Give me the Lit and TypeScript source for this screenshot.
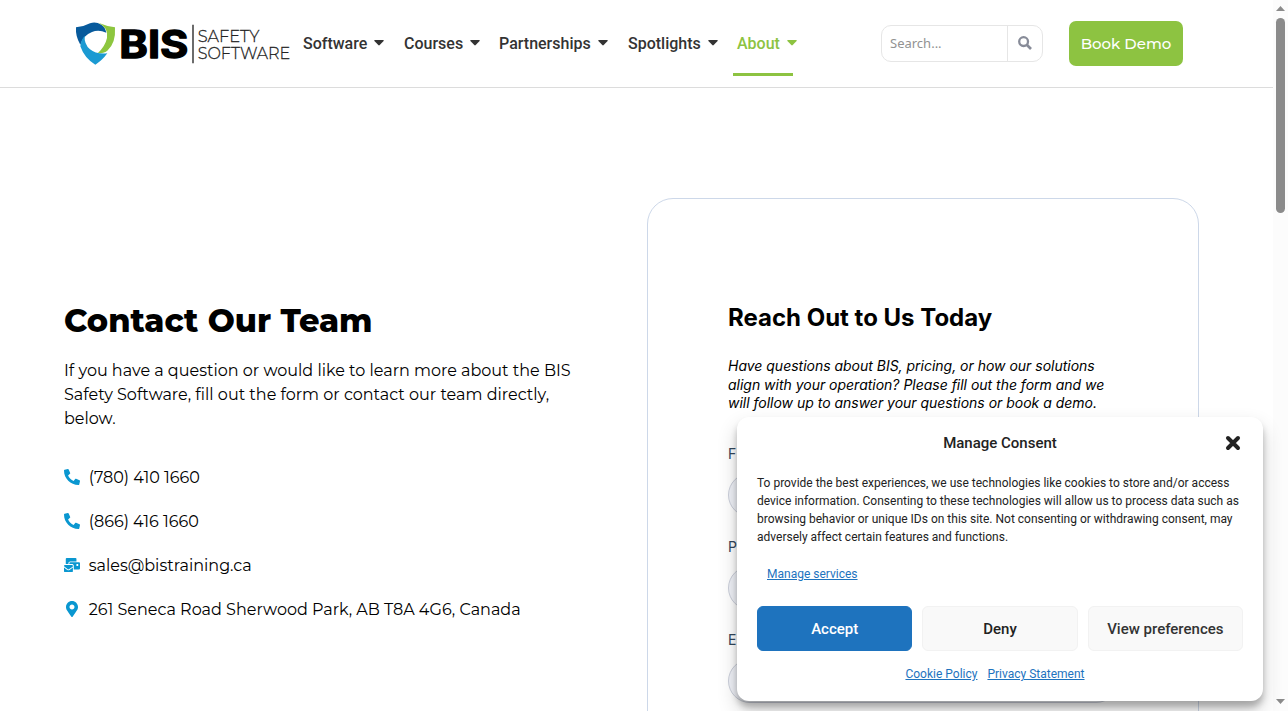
import { LitElement, html, css } from "lit";
import { customElement } from "lit/decorators.js";

const caret = html`<svg class="caret" width="10" height="6" viewBox="0 0 10 6"><path fill="currentColor" d="M.8 0h8.4q.9.2.4 1L5.7 5.1q-.7.6-1.4 0L.4 1Q0 .2.8 0z"/></svg>`;
const phone = html`<svg width="16" height="16" viewBox="0 0 512 512"><path fill="currentColor" d="M493.4 24.6l-104-24c-11.300-2.600-22.900 3.300-27.500 13.900l-48 112c-4.200 9.800-1.400 21.300 6.900 28l60.600 49.600c-36 76.700-98.900 140.500-177.200 177.200l-49.600-60.600c-6.800-8.300-18.200-11.100-28-6.900l-112 48C3.900 366.500-2 378.100.6 389.400l24 104C27.100 504.200 36.700 512 48 512c256.100 0 464-207.500 464-464 0-11.200-7.700-20.900-18.600-23.400z" transform="translate(512) scale(-1 1)"/></svg>`;
const mail = html`<svg width="16" height="16" viewBox="0 0 576 512"><path fill="currentColor" d="M160 448c-25.600 0-51.200-22.400-64-32-64-44.800-83.200-60.800-96-70.400V480c0 17.670 14.330 32 32 32h256c17.670 0 32-14.330 32-32V345.600c-12.800 9.600-32 25.600-96 70.400-12.800 9.600-38.400 32-64 32zm128-192H32c-17.670 0-32 14.330-32 32v16c25.600 19.200 22.400 19.200 115.200 86.400 9.600 6.400 28.800 25.600 44.800 25.600s35.200-19.200 44.800-22.400c92.800-67.200 89.600-67.200 115.200-86.400V288c0-17.670-14.330-32-32-32zm256-96H224c-17.670 0-32 14.330-32 32v32h96c33.210 0 60.590 25.420 63.710 57.820l.29-.22V416h192c17.670 0 32-14.330 32-32V192c0-17.670-14.330-32-32-32zm-32 128h-64v-64h64v64zm-352-96c0-35.290 28.710-64 64-64h224V32c0-17.670-14.330-32-32-32H96C78.330 0 64 14.330 64 32v192h96v-32z"/></svg>`;
const pin = html`<svg width="16" height="16" viewBox="0 0 384 512"><path fill="currentColor" d="M172.268 501.670C26.970 291.031 0 269.413 0 192 0 85.961 85.961 0 192 0s192 85.961 192 192c0 77.413-26.970 99.031-172.268 309.670-9.535 13.774-29.930 13.773-39.464 0zM192 272c44.183 0 80-35.817 80-80s-35.817-80-80-80-80 35.817-80 80 35.817 80 80 80z"/></svg>`;

@customElement("app-root")
export class AppRoot extends LitElement {
  static styles = css`
    :host { display: block; height: 711px; overflow: hidden; position: relative; background: #fff; color: #000; font-family: Inter, sans-serif; }
    * { box-sizing: border-box; }
    svg { display: block; flex: none; }
    .mont { font-family: Montserrat, Inter, sans-serif; }
    .page { width: 1273px; height: 711px; overflow: hidden; }
    header { height: 88px; border-bottom: 1px solid #dcdcdc; display: flex; padding-left: 75px; }
    .logo { margin-top: 21px; }
    nav { display: flex; margin-left: 9px; width: 578px; height: 87px; align-items: center; font: 500 16px Roboto, sans-serif; color: #333; }
    .item { display: flex; align-items: center; height: 22px; flex: none; }
    .caret { margin-left: 7px; margin-top: -2px; }
    .n1 { width: 101px; } .n2 { width: 95px; } .n3 { width: 129px; } .n4 { width: 105px; }
    .n5 { height: 64px; padding: 0 0 0 4px; border-bottom: 3px solid #8dc341; border-top: 3px solid transparent; width: 60px; color: #8dc341; }
    .search { margin-top: 25px; width: 162px; height: 37px; border: 1px solid #e6e6e6; border-radius: 10px; display: flex; align-items: center; font: 13px "Noto Sans", sans-serif; color: #929292; }
    .query { width: 126px; padding-left: 8px; line-height: 35px; border-right: 1px solid #e6e6e6; height: 35px; }
    .glass { margin-left: 10px; color: #878b98; margin-top: -1px; }
    .demo { margin: 21px 0 0 26px; width: 114px; height: 45px; border-radius: 7px; background: #8dc341; color: #fff; display: flex; align-items: center; justify-content: center; font-size: 15px; font-weight: 500; white-space: nowrap; }
    main { display: flex; padding-left: 64px; }
    .contact { width: 583px; padding-top: 212px; white-space: nowrap; }
    h1 { margin: 0; font-size: 32px; font-weight: 800; line-height: 42px; }
    .intro { margin: 17px 0 0; font-size: 16px; line-height: 24px; }
    .intro span { display: block; }
    ul { list-style: none; margin: 35px 0 0; padding: 0; font-size: 16px; }
    li { height: 44px; display: flex; align-items: flex-start; line-height: 24px; }
    li svg { color: #0a97d0; margin: 3px 8.7px 0 0; }
    .card { margin-top: 110px; width: 552px; height: 700px; border: 1px solid #cdd8e9; border-radius: 26px; padding: 103px 80px 0; }
    h2 { font-size: 24px; font-weight: 700; line-height: 32px; margin: 0; }
    .lead { font-size: 14px; font-style: italic; line-height: 18.6px; letter-spacing: -.015px; margin: 23px 0 31px; white-space: nowrap; }
    .field { height: 93px; color: #33475b; font-size: 14px; }
    .field div { line-height: 20px; margin-bottom: 9px; }
    .field p { margin: 0; height: 44px; border: 1px solid #cbcfda; border-radius: 22px; background: #f0f2f8; }
    .bar { position: absolute; right: 0; top: 0; width: 15px; height: 711px; background: #fcfcfc; display: flex; flex-direction: column; align-items: center; }
    .thumb { width: 9px; height: 195px; border-radius: 5px; background: #8b8b8b; margin: 7px 0 486px; }
    .consent { position: absolute; left: 737px; top: 417px; width: 526px; height: 284px; border-radius: 12px; background: #fff; box-shadow: rgba(0,0,0,.19) 0 10px 20px, rgba(0,0,0,.23) 0 6px 6px; padding: 16px 20px; color: #222; font: 12px/18px Roboto, sans-serif; }
    .head { display: grid; grid-template-columns: 20px 1fr 20px; height: 20px; align-items: center; text-align: center; font-size: 15px; font-weight: 500; }
    .head svg { justify-self: end; margin-right: 2px; }
    .copy { margin: 21px 0 19px; white-space: nowrap; }
    a { color: #1e73be; text-decoration: underline; }
    .svc { padding-left: 10px; }
    .buttons { display: grid; grid-template-columns: repeat(3, 1fr); gap: 10px; margin-top: 23px; }
    .btn { height: 45px; border: 1px solid #f2f2f2; border-radius: 6px; background: #f9f9f9; display: flex; align-items: center; justify-content: center; font-size: 15px; font-weight: 500; }
    .pref { color: #333; }
    .accept { background: #1e73be; border-color: #1e73be; color: #fff; }
    .links { display: flex; justify-content: center; gap: 10px; margin-top: 14px; padding-right: 10px; }
  `;

  render() {
    return html`<div class="page">
      <header>
        <svg class="logo" width="219" height="45" viewBox="33 33 657 135">
          <path fill="#075a9c" d="M36 52Q60 50 78 40Q95 34 112 44Q124 52 127 68Q104 58 84 66Q58 76 49 104Q34 80 36 52Z"/>
          <path fill="#8dc63f" d="M103 38Q126 48 153 52Q156 100 130 122Q120 130 101 130Q124 108 129 84Q134 52 103 38Z"/>
          <path fill="#1b9ad2" d="M49 109Q51 90 62 77Q60 102 78 118Q95 133 130 130Q114 152 94 164Q62 146 49 109Z"/>
          <text x="166" y="143" font-family="Inter" font-weight="700" font-size="113" textLength="207" lengthAdjust="spacingAndGlyphs" stroke="#000" stroke-width="4" stroke-linejoin="round">BIS</text>
          <path fill="#222" d="M385 44h4v116h-4z"/>
          <text x="401" y="95" font-family="Montserrat, Inter" font-weight="300" fill="#222" stroke="#222" stroke-width=".8" font-size="50" textLength="185" lengthAdjust="spacingAndGlyphs">SAFETY</text>
          <text x="401" y="146" font-family="Montserrat, Inter" font-weight="300" fill="#222" stroke="#222" stroke-width=".8" font-size="50" textLength="278" lengthAdjust="spacingAndGlyphs">SOFTWARE</text>
        </svg>
        <nav>
          <div class="item n1">Software${caret}</div><div class="item n2">Courses${caret}</div><div class="item n3">Partnerships${caret}</div><div class="item n4">Spotlights${caret}</div><div class="item n5">About${caret}</div>
        </nav>
        <div class="search"><div class="query">Search...</div><svg class="glass" width="14" height="14" viewBox="0 0 14 14"><circle cx="5.600" cy="5.600" r="4.400" fill="none" stroke="currentColor" stroke-width="2.300"/><path d="M9 9l4 4" stroke="currentColor" stroke-width="2.600"/></svg></div>
        <div class="demo mont">Book Demo</div>
      </header>
      <main>
        <section class="contact mont">
          <h1>Contact Our Team</h1>
          <p class="intro"><span>If you have a question or would like to learn more about the BIS</span><span>Safety Software, fill out the form or contact our team directly,</span><span>below.</span></p>
          <ul>
            <li>${phone}<span>(780) 410 1660</span></li>
            <li>${phone}<span>(866) 416 1660</span></li>
            <li>${mail}<span>sales@bistraining.ca</span></li>
            <li>${pin}<span>261 Seneca Road Sherwood Park, AB T8A 4G6, Canada</span></li>
          </ul>
        </section>
        <section class="card">
          <h2>Reach Out to Us Today</h2>
          <p class="lead">Have questions about BIS, pricing, or how our solutions<br>align with your operation? Please fill out the form and we<br>will follow up to answer your questions or book a demo.</p>
          ${["F", "P", "E"].map((t) => html`<div class="field"><div>${t}</div><p></p></div>`)}
        </section>
      </main>
    </div>
    <div class="bar">
      <svg width="9" height="11" viewBox="0 0 9 11"><path fill="#8b8b8b" d="M0 11l4.500-5 4.500 5z"/></svg>
      <div class="thumb"></div>
      <svg width="9" height="5" viewBox="0 0 9 5"><path fill="#8b8b8b" d="M0 0h9L4.500 5z"/></svg>
    </div>
    <div class="consent">
      <div class="head"><i></i><span>Manage Consent</span><svg width="16" height="16" viewBox="0 0 16 16"><path d="M3 3l10 10M13 3L3 13" stroke="#222" stroke-width="4" stroke-linecap="round"/></svg></div>
      <div class="copy">To provide the best experiences, we use technologies like cookies to store and/or access<br>device information. Consenting to these technologies will allow us to process data such as<br>browsing behavior or unique IDs on this site. Not consenting or withdrawing consent, may<br>adversely affect certain features and functions.</div>
      <div class="svc"><a>Manage services</a></div>
      <div class="buttons"><div class="btn accept">Accept</div><div class="btn">Deny</div><div class="btn pref">View preferences</div></div>
      <div class="links"><a>Cookie Policy</a><a>Privacy Statement</a></div>
    </div>`;
  }
}
